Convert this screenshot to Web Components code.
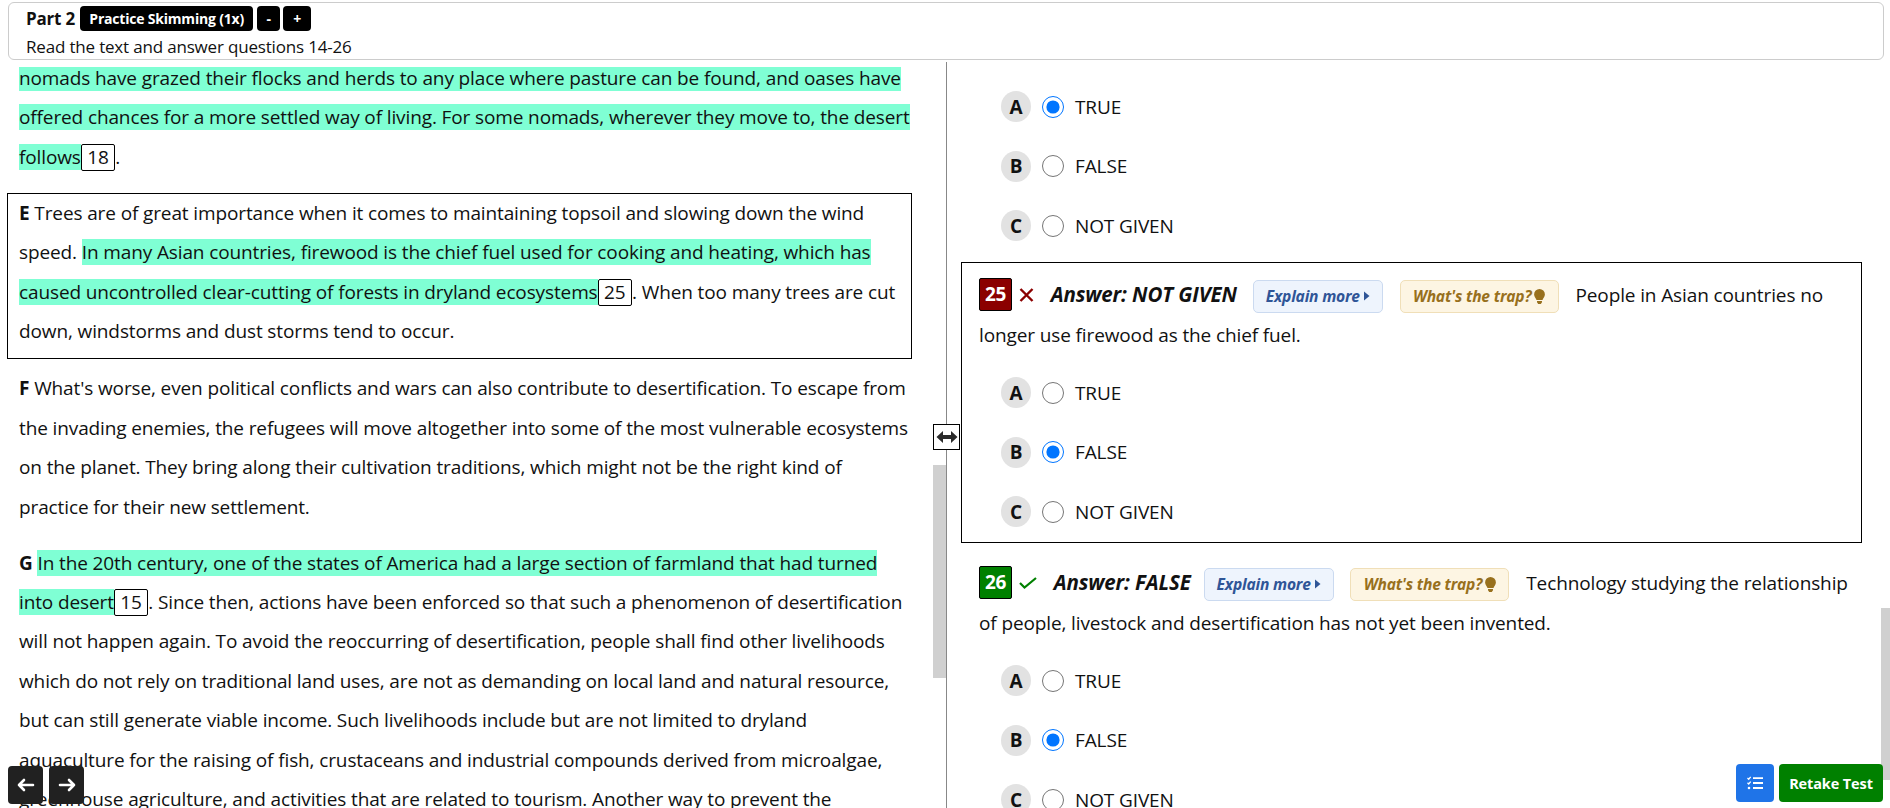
<!DOCTYPE html>
<html>
<head>
<meta charset="utf-8">
<title>Reading test review</title>
<style>
  html, body { margin: 0; height: 100%; overflow: hidden; background: #fff; }
  body { font-family: "Open Sans", "Noto Sans", sans-serif; font-size: 19px; letter-spacing: -0.12px; color: #111; }
</style>
</head>
<body>
<exam-app>
  <part-header slot="header" part-name="Part 2" instructions="Read the text and answer questions 14-26"></part-header>

  <reading-pane slot="left">
    <passage-para>
      <hl-text>nomads have grazed their flocks and herds to any place where pasture can be found, and oases have</hl-text><br>
      <hl-text>offered chances for a more settled way of living. For some nomads, wherever they move to, the desert</hl-text><br>
      <hl-text>follows</hl-text><gap-num>18</gap-num>.
    </passage-para>
    <passage-para boxed>
      <b>E</b> Trees are of great importance when it comes to maintaining topsoil and slowing down the wind<br>
      speed. <hl-text>In many Asian countries, firewood is the chief fuel used for cooking and heating, which has</hl-text><br>
      <hl-text>caused uncontrolled clear-cutting of forests in dryland ecosystems</hl-text><gap-num>25</gap-num>. When too many trees are cut<br>
      down, windstorms and dust storms tend to occur.
    </passage-para>
    <passage-para>
      <b>F</b> What's worse, even political conflicts and wars can also contribute to desertification. To escape from<br>
      the invading enemies, the refugees will move altogether into some of the most vulnerable ecosystems<br>
      on the planet. They bring along their cultivation traditions, which might not be the right kind of<br>
      practice for their new settlement.
    </passage-para>
    <passage-para>
      <b>G</b> <hl-text>In the 20th century, one of the states of America had a large section of farmland that had turned</hl-text><br>
      <hl-text>into desert</hl-text><gap-num>15</gap-num>. Since then, actions have been enforced so that such a phenomenon of desertification<br>
      will not happen again. To avoid the reoccurring of desertification, people shall find other livelihoods<br>
      which do not rely on traditional land uses, are not as demanding on local land and natural resource,<br>
      but can still generate viable income. Such livelihoods include but are not limited to dryland<br>
      aquaculture for the raising of fish, crustaceans and industrial compounds derived from microalgae,<br>
      greenhouse agriculture, and activities that are related to tourism. Another way to prevent the
    </passage-para>
  </reading-pane>

  <answer-pane slot="right">
    <question-group selected="A"></question-group>
    <question-group boxed num="25" status="wrong" answer="NOT GIVEN" selected="B">People in Asian countries no<br>longer use firewood as the chief fuel.</question-group>
    <question-group num="26" status="right" answer="FALSE" selected="B">Technology studying the relationship<br>of people, livestock and desertification has not yet been invented.</question-group>
  </answer-pane>
</exam-app>

<script>
class ExamApp extends HTMLElement {
  constructor() {
    super();
    this.attachShadow({ mode: 'open' }).innerHTML = `
      <style>
        :host { display: flex; flex-direction: column; height: 100vh; position: relative; overflow: hidden; }
        .split { flex: 1; min-height: 0; display: flex; }
        .left { width: 946px; flex: none; padding-top: 5px; box-sizing: content-box; border-right: 1px solid #888; display: flex; }
        .scroll { flex: 1; min-width: 0; overflow: hidden; }
        .right { flex: 1; min-width: 0; overflow: hidden; }
        .thumb { position: absolute; background: #d0d0d0; }
        .thumb.l { left: 933px; top: 465px; width: 13px; height: 213px; }
        .thumb.r { left: 1881px; top: 608px; width: 9px; height: 172px; }
        .handle { position: absolute; left: 933px; top: 424px; width: 25px; height: 24px; background: #fff; border: 1px solid #000;
          display: flex; align-items: center; justify-content: center; }
        .nav { position: absolute; left: 8px; top: 766px; display: flex; gap: 6px; }
        .nav span { width: 35px; height: 38px; background: #212121; border-radius: 4px; display: flex; align-items: center; justify-content: center; }
        .actions { position: absolute; left: 1736px; top: 764px; display: flex; gap: 5px; }
        .actions span { height: 38px; border-radius: 4px; display: flex; align-items: center; justify-content: center; color: #fff; font-weight: 700; font-size: 14.500px; }
        .list { width: 38px; background: #1f74e8; }
        .retake { width: 104px; background: #008000; }
      </style>
      <slot name="header"></slot>
      <div class="split">
        <div class="left"><div class="scroll"><slot name="left"></slot></div></div>
        <div class="right"><slot name="right"></slot></div>
      </div>
      <div class="thumb l"></div>
      <div class="thumb r"></div>
      <div class="handle">
        <svg width="22" height="14" viewBox="0 0 22 14"><path d="M0.500 7 7 1v3.900h8V1l6.500 6L15 13V9.100H7V13z" fill="#2b2b2b"/></svg>
      </div>
      <div class="nav">
        <span><svg width="18" height="16" viewBox="0 0 18 16" fill="none" stroke="#fff" stroke-width="2.600" stroke-linecap="round" stroke-linejoin="round"><path d="M16 8H2M7 3 2 8l5 5"/></svg></span>
        <span><svg width="18" height="16" viewBox="0 0 18 16" fill="none" stroke="#fff" stroke-width="2.600" stroke-linecap="round" stroke-linejoin="round"><path d="M2 8h14M11 3l5 5-5 5"/></svg></span>
      </div>
      <div class="actions">
        <span class="list"><svg width="16" height="14" viewBox="0 0 16 14" fill="none" stroke="#fff"><path d="M.5 2 1.700 3.200 3.700.8M.5 6.800 1.700 8 3.700 5.600" stroke-width="1.300"/><circle cx="2" cy="12" r="1.300" fill="#fff" stroke="none"/><path d="M6 2.200h10M6 7h10M6 12h10" stroke-width="1.800"/></svg></span>
        <span class="retake">Retake Test</span>
      </div>
    `;
  }
}

class PartHeader extends HTMLElement {
  constructor() {
    super();
    this.attachShadow({ mode: 'open' });
  }

  connectedCallback() {
    this.shadowRoot.innerHTML = `
      <style>
        :host { display: block; margin: 2px 6px 2px 8px; height: 56px; border: 1px solid #ccc; border-radius: 6px; padding: 0 17px; font-size: 17px; letter-spacing: -0.18px; line-height: 28px; flex: none; }
        .top { display: flex; align-items: center; height: 31px; }
        b { font-size: 17px; margin-right: 5px; }
        button { font: 700 14px "Open Sans", sans-serif; letter-spacing: -0.2px; height: 25px; background: #000; color: #fff; border: 0; border-radius: 4px; padding: 0; margin-right: 4px; }
        .skim { width: 173px; }
        .minus { width: 23px; margin-right: 3px; }
        .plus { width: 28px; }
        .ins { line-height: 26px; }
      </style>
      <div class="top">
        <b>${this.getAttribute('part-name')}</b>
        <button class="skim">Practice Skimming (1x)</button>
        <button class="minus">-</button>
        <button class="plus">+</button>
      </div>
      <div class="ins">${this.getAttribute('instructions')}</div>
    `;
  }
}

class ReadingPane extends HTMLElement {
  constructor() {
    super();
    this.attachShadow({ mode: 'open' }).innerHTML = `
      <style>
        :host { display: block; margin-top: -8px; white-space: nowrap; }
      </style>
      <slot></slot>
    `;
  }
}

class PassagePara extends HTMLElement {
  constructor() {
    super();
    this.attachShadow({ mode: 'open' }).innerHTML = `
      <style>
        :host { display: block; line-height: 39.400px; margin: 0 0 16.600px; padding: 0 12px 0 19px; }
        :host([boxed]) { border: 1px solid #000; margin: -1px 34px 10px 7px; padding: 0 11px 7px 11px; }
      </style>
      <slot></slot>
    `;
  }
}

class HlText extends HTMLElement {
  constructor() {
    super();
    this.attachShadow({ mode: 'open' }).innerHTML =
      '<style>:host { display: inline; background: #7fffd4; }</style><slot></slot>';
  }
}

class GapNum extends HTMLElement {
  constructor() {
    super();
    this.attachShadow({ mode: 'open' }).innerHTML = `
      <style>
        :host { display: inline-block; border: 1px solid #000; border-radius: 2px; padding: 0 5.500px; line-height: 25px; background: #fff; }
      </style>
      <slot></slot>
    `;
  }
}

class AnswerPane extends HTMLElement {
  constructor() {
    super();
    this.attachShadow({ mode: 'open' }).innerHTML = `
      <style>
        :host { display: block; padding: 14px 28px 0 14px; white-space: nowrap; }
      </style>
      <slot></slot>
    `;
  }
}

class OptionRow extends HTMLElement {
  constructor() {
    super();
    this.attachShadow({ mode: 'open' });
  }

  connectedCallback() {
    this.shadowRoot.innerHTML = `
      <style>
        :host { display: flex; align-items: center; height: 59.500px; padding-left: 22px; }
        .key { width: 30px; height: 31px; border-radius: 50%; background: #e2e2e2; font-weight: 700; display: flex; align-items: center; justify-content: center; margin-right: 11px; }
        input { width: 22px; height: 22px; margin: 0 11px 0 0; }
      </style>
      <span class="key">${this.getAttribute('key')}</span>
      <input type="radio" ${this.hasAttribute('checked') ? 'checked' : ''}>
      <span><slot></slot></span>
    `;
  }
}

class QuestionGroup extends HTMLElement {
  constructor() {
    super();
    this.attachShadow({ mode: 'open' });
  }

  connectedCallback() {
    const num = this.getAttribute('num');
    const selected = this.getAttribute('selected');
    const wrong = this.getAttribute('status') === 'wrong';
    const mark = wrong
      ? '<svg class="mark" width="15" height="14" viewBox="0 0 15 14" fill="none" stroke="#8b0000" stroke-width="2.400"><path d="M1.500 1l12 12M13.500 1l-12 12"/></svg>'
      : '<svg class="mark good-mark" width="18" height="12" viewBox="0 0 18 12" fill="none" stroke="#008000" stroke-width="2.200"><path d="M1 6l4.500 4.500L17 1"/></svg>';
    const head = num ? `
      <div class="head">
        <span class="badge ${wrong ? 'bad' : 'good'}">${num}</span>
        ${mark}
        <b class="ans ${wrong ? '' : 'short'}">Answer: ${this.getAttribute('answer')}</b>
        <span class="btn explain">Explain more <svg width="7" height="10" viewBox="0 0 7 10"><path d="M1 .5 6.500 5 1 9.500z" fill="#2f5597"/></svg></span>
        <span class="btn trap">What's the trap? <svg width="11" height="15" viewBox="0 0 11 15"><path d="M5.500 0a5.400 5.400 0 0 0-5.400 5.400c0 2.400 1.900 3.500 2.400 5.600h6c.5-2.100 2.400-3.200 2.400-5.600A5.400 5.400 0 0 0 5.500 0zM3 12h5v1.200L6.800 15H4.200L3 13.200z" fill="#98701d"/></svg></span>
        <span class="txt"><slot></slot></span>
      </div>` : '';
    const options = [['A', 'TRUE'], ['B', 'FALSE'], ['C', 'NOT GIVEN']]
      .map(([k, t]) => `<option-row key="${k}" ${k === selected ? 'checked' : ''}>${t}</option-row>`)
      .join('');
    this.shadowRoot.innerHTML = `
      <style>
        :host { display: block; border: 1px solid transparent; margin-bottom: 5.200px; padding: 0 17px .5px; }
        :host([num]) { padding-top: 12px; }
        :host([boxed]) { border-color: #000; margin-bottom: 7.200px; }
        .head { line-height: 39.400px; margin-bottom: 8px; }
        .badge { display: inline-block; width: 33px; height: 33px; box-sizing: border-box; line-height: 31px; text-align: center; color: #fff; font-weight: 700; border: 1px solid #000; border-radius: 2px; vertical-align: 1px; letter-spacing: -0.4px; }
        .bad { background: #8b0000; }
        .good { background: #008000; }
        .mark { vertical-align: 0; margin: 0 12px 0 2px; }
        .good-mark { vertical-align: 1px; }
        .ans { font-style: italic; font-size: 20.500px; margin-right: 11px; }
        .ans.short { margin-right: 8px; }
        .btn { display: inline-flex; align-items: center; justify-content: center; gap: 3px; box-sizing: border-box; height: 33px; font: italic 700 15.600px "Open Sans", sans-serif; letter-spacing: -0.2px; border-radius: 5px; border: 1px solid; vertical-align: baseline; margin-right: 12px; }
        .explain { width: 130px; background: #eef4fd; border-color: #cbdaf0; color: #2f5597; }
        .trap { width: 159px; background: #fdf5e3; border-color: #f0dfb8; color: #98701d; margin-right: 12px; }
      </style>
      ${head}
      ${options}
    `;
  }
}

window.customElements.define('exam-app', ExamApp);
window.customElements.define('part-header', PartHeader);
window.customElements.define('reading-pane', ReadingPane);
window.customElements.define('passage-para', PassagePara);
window.customElements.define('hl-text', HlText);
window.customElements.define('gap-num', GapNum);
window.customElements.define('answer-pane', AnswerPane);
window.customElements.define('option-row', OptionRow);
window.customElements.define('question-group', QuestionGroup);
</script>
</body>
</html>
